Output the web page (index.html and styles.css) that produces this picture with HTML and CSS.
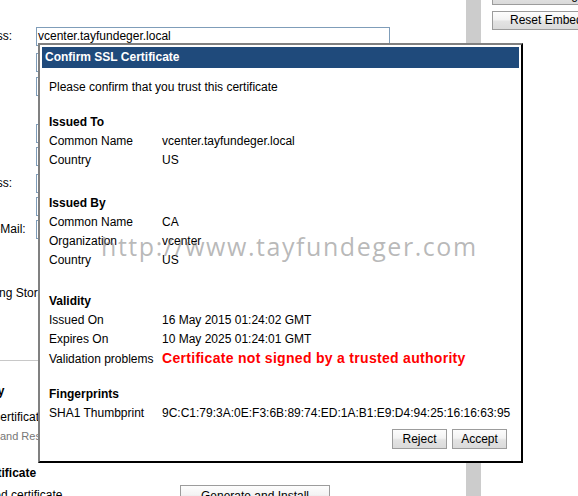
FILE: index.html
```html
<!DOCTYPE html>
<html>
<head>
<meta charset="utf-8">
<title>Confirm SSL Certificate</title>
<link rel="stylesheet" href="styles.css">
</head>
<body>
<div class="screen">
  <div class="main">
    <div class="page">
      <div class="group group-a">
        <div class="field"><span class="label">IP Address:</span><span class="input">vcenter.tayfundeger.local</span></div>
      </div>
      <div class="group group-b">
        <div class="field"><span class="label"></span><span class="input"></span></div>
        <div class="field"><span class="label"></span><span class="input"></span></div>
      </div>
      <div class="group group-c">
        <div class="field"><span class="label"></span><span class="input"></span></div>
        <div class="field"><span class="label"></span><span class="input"></span></div>
      </div>
      <div class="group group-d">
        <div class="field"><span class="label">IP Address:</span><span class="input"></span></div>
        <div class="field"><span class="label"></span><span class="input"></span></div>
        <div class="field"><span class="label">Admin E-Mail:</span><span class="input"></span></div>
      </div>
      <div class="storage">On Existing Storage</div>
      <div class="rule"></div>
      <div class="heading heading-authority">Authority</div>
      <div class="line line-current">Current certificate</div>
      <div class="note">Generate and Restart services</div>
      <div class="heading heading-ssl">SSL Certificate</div>
      <div class="action-row">
        <span class="action-label">Generated certificate</span>
        <button class="btn action-btn">Generate and Install</button>
      </div>
    </div>
  </div>
  <div class="scrollbar"></div>
  <div class="side">
    <button class="btn side-btn">Save Settings</button>
    <button class="btn side-btn">Reset Embedded Database</button>
  </div>

  <div class="dialog">
    <div class="dialog-title">Confirm SSL Certificate</div>
    <div class="dialog-body">
      <div class="intro">Please confirm that you trust this certificate</div>

      <div class="section sec-to">
        <div class="sec-title">Issued To</div>
        <div class="row"><span>Common Name</span><span>vcenter.tayfundeger.local</span></div>
        <div class="row"><span>Country</span><span>US</span></div>
      </div>

      <div class="section sec-by">
        <div class="sec-title">Issued By</div>
        <div class="row"><span>Common Name</span><span>CA</span></div>
        <div class="row"><span>Organization</span><span>vcenter</span></div>
        <div class="row"><span>Country</span><span>US</span></div>
      </div>

      <div class="section sec-valid">
        <div class="sec-title">Validity</div>
        <div class="row"><span>Issued On</span><span>16 May 2015 01:24:02 GMT</span></div>
        <div class="row"><span>Expires On</span><span>10 May 2025 01:24:01 GMT</span></div>
        <div class="row"><span>Validation problems</span><span class="problem">Certificate not signed by a trusted authority</span></div>
      </div>

      <div class="section sec-fp">
        <div class="sec-title">Fingerprints</div>
        <div class="row"><span>SHA1 Thumbprint</span><span>9C:C1:79:3A:0E:F3:6B:89:74:ED:1A:B1:E9:D4:94:25:16:16:63:95</span></div>
      </div>

      <div class="dialog-buttons">
        <button class="btn dlg-btn">Reject</button>
        <button class="btn dlg-btn">Accept</button>
      </div>
    </div>
  </div>

  <div class="watermark">http://www.tayfundeger.com</div>
</div>
</body>
</html>
```

FILE: styles.css
```css
html, body {
  margin: 0;
  padding: 0;
  overflow: hidden;
  background: #fff;
}

.screen {
  position: relative;
  display: flex;
  width: 578px;
  height: 496px;
  overflow: hidden;
  font-family: "Liberation Sans", Arial, sans-serif;
  font-size: 12px;
  color: #000;
}

/* background page (horizontally scrolled) */
.main {
  flex: none;
  width: 466px;
  height: 100%;
  overflow: hidden;
}

.page {
  display: flex;
  flex-direction: column;
  margin-left: -49px;
  padding-top: 27px;
  width: 515px;
}

.field {
  display: flex;
  align-items: center;
  height: 19px;
  margin-bottom: 4px;
}

.label {
  flex: none;
  width: 85px;
  white-space: nowrap;
  line-height: 19px;
}

.input {
  flex: none;
  box-sizing: border-box;
  width: 354px;
  height: 19px;
  border: 1px solid #7f9db9;
  padding: 0 1px;
  line-height: 17px;
  background: #fff;
  white-space: nowrap;
}

.group-a { margin-bottom: 3px; }
.group-b .field { margin-bottom: 5px; }
.group-b { margin-bottom: 23px; }
.group-c { margin-bottom: 4px; }

.storage {
  margin-top: 41px;
  line-height: 19px;
  white-space: nowrap;
}

.rule {
  margin-top: 57px;
  height: 1px;
  background: #c8c8c8;
}

.heading {
  font-weight: bold;
  line-height: 19px;
  white-space: nowrap;
}

.heading-authority { margin-top: 21px; }

.line {
  line-height: 19px;
  white-space: nowrap;
}

.line-current { margin-top: 7px; }

.note {
  margin-top: 2px;
  font-size: 11px;
  line-height: 15px;
  color: #777;
  white-space: nowrap;
}

.heading-ssl { margin-top: 20px; }

.action-row {
  display: flex;
  align-items: flex-start;
  margin-top: 2px;
}

.action-label {
  flex: none;
  width: 229px;
  line-height: 19px;
  padding-top: 1px;
  white-space: nowrap;
}

.btn {
  box-sizing: border-box;
  margin: 0;
  font-family: "Liberation Sans", Arial, sans-serif;
  font-size: 12px;
  color: #000;
  border: 1px solid #9c9c9c;
  background: linear-gradient(#fdfdfd 0%, #f3f3f3 45%, #e3e3e3 55%, #dadada 100%);
  border-radius: 0;
  white-space: nowrap;
}

.action-btn {
  width: 150px;
  height: 22px;
  padding: 0;
}

/* grey bar */
.scrollbar {
  flex: none;
  width: 15px;
  height: 100%;
  background: #cccccc;
}

.side {
  flex: none;
  display: flex;
  flex-direction: column;
  gap: 6px;
  margin-top: -14px;
  padding-left: 11px;
}

.side-btn {
  width: 170px;
  height: 19px;
  padding: 0 0 0 17px;
  text-align: left;
  line-height: 17px;
}

/* dialog */
.dialog {
  position: absolute;
  left: 38px;
  top: 43px;
  box-sizing: border-box;
  width: 485px;
  height: 420px;
  padding: 2px;
  border-style: solid;
  border-width: 2px;
  border-color: #808080 #000 #000 #808080;
  background: #fff;
}

.dialog-title {
  height: 21px;
  line-height: 21px;
  padding-left: 3px;
  background: #1f4a7b;
  color: #fff;
  font-weight: bold;
  font-size: 12px;
}

.dialog-body {
  padding: 10px 12px 0 7px;
}

.intro {
  line-height: 19px;
}

.sec-title {
  font-weight: bold;
  line-height: 19px;
}

.row {
  display: grid;
  grid-template-columns: 113px 1fr;
  align-items: baseline;
  line-height: 19px;
  white-space: nowrap;
}

.sec-to { margin-top: 16px; }
.sec-by { margin-top: 24px; }
.sec-valid { margin-top: 22px; }
.sec-fp { margin-top: 16px; }

.problem {
  color: #ff0000;
  font-weight: bold;
  font-size: 14px;
  letter-spacing: 0.3px;
}

.dialog-buttons {
  display: flex;
  justify-content: flex-end;
  gap: 5px;
  margin-top: 6px;
}

.dlg-btn {
  width: 55px;
  height: 20px;
  padding: 0;
}

/* watermark overlay */
.watermark {
  position: absolute;
  left: 101px;
  top: 234px;
  font-family: "Open Sans", "DejaVu Sans", sans-serif;
  font-size: 25px;
  line-height: 1;
  letter-spacing: 1.55px;
  color: rgba(115, 115, 115, 0.5);
  white-space: nowrap;
  pointer-events: none;
}
```
